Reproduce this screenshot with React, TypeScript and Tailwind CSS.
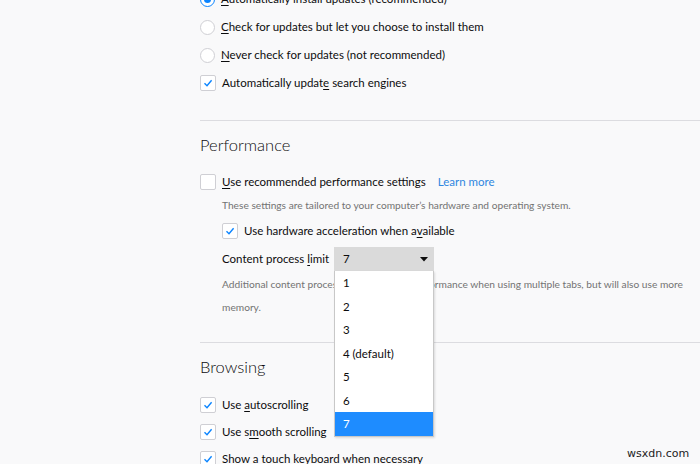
import React from "react";

const U = ({ children }: { children: React.ReactNode }) => (
  <span className="underline underline-offset-2 decoration-1">{children}</span>
);

function Radio({ checked }: { checked?: boolean }) {
  return (
    <span
      className={
        "w-[15px] h-[15px] rounded-full border bg-white shrink-0 flex items-center justify-center " +
        (checked ? "border-[#0a84ff]" : "border-[#cfcfd4]")
      }
    >
      {checked ? <span className="w-[7px] h-[7px] rounded-full bg-[#0a84ff]" /> : null}
    </span>
  );
}

function Check({ checked }: { checked?: boolean }) {
  return (
    <span className="w-[16px] h-[16px] rounded-[2px] border border-[#cfcfd4] bg-white shrink-0 flex items-center justify-center">
      {checked ? (
        <svg width="12" height="12" viewBox="0 0 12 12">
          <path d="M2.5 6.3 L5 8.7 L9.6 3.2" fill="none" stroke="#0a84ff" strokeWidth="1.4" />
        </svg>
      ) : null}
    </span>
  );
}

export default function App() {
  const items = ["1", "2", "3", "4 (default)", "5", "6", "7"];
  return (
    <div
      className="w-[700px] h-[464px] overflow-hidden bg-[#f9f9fa] text-[#0c0c0d] relative"
      style={{ fontFamily: 'Lato, "Open Sans", sans-serif' }}
    >
      <div className="pl-[200px] mt-[-15px] text-[11.5px]">
        <div className="h-[28px] flex items-center gap-[6px]">
          <Radio checked />
          <span>
            <U>A</U>utomatically install updates (recommended)
          </span>
        </div>
        <div className="h-[28px] flex items-center gap-[6px]">
          <Radio />
          <span>
            <U>C</U>heck for updates but let you choose to install them
          </span>
        </div>
        <div className="h-[28px] flex items-center gap-[6px]">
          <Radio />
          <span>
            <U>N</U>ever check for updates (not recommended)
          </span>
        </div>
        <div className="h-[28px] flex items-center gap-[6px]">
          <Check checked />
          <span>
            Automatically updat<U>e</U> search engines
          </span>
        </div>

        <div className="mt-[23px] border-t border-[#dcdce0]" />

        <div className="h-[48px] flex items-center text-[16.5px] font-light">Performance</div>

        <div className="h-[26px] flex items-center gap-[6px]">
          <Check />
          <span>
            <U>U</U>se recommended performance settings
          </span>
          <span className="ml-[6px] text-[#2f87e0]">Learn more</span>
        </div>
        <div className="h-[22px] flex items-center pl-[22px] text-[10.2px] text-[#737373]">
          These settings are tailored to your computer’s hardware and operating system.
        </div>
        <div className="h-[28px] flex items-center gap-[6px] pl-[22px]">
          <Check checked />
          <span>
            Use hardware acceleration when a<U>v</U>ailable
          </span>
        </div>
        <div className="h-[28px] flex items-center pl-[22px]">
          <span className="w-[112px] shrink-0 whitespace-nowrap">
            Content process <U>l</U>imit
          </span>
          <div className="relative">
            <div className="w-[100px] h-[24px] bg-[#dadada] flex items-center justify-between pl-[9px] pr-[6px]">
              <span>7</span>
              <svg width="8" height="5" viewBox="0 0 8 5">
                <path d="M0 0 L8 0 L4 4.5 Z" fill="#0c0c0d" />
              </svg>
            </div>
            <div className="absolute left-0 top-[24px] w-[100px] bg-white border border-t-0 border-[#c8c8c8] shadow-[1px_1px_2px_rgba(0,0,0,0.12)] z-10">
              {items.map((it) => (
                <div
                  key={it}
                  className={
                    "h-[23.5px] flex items-center pl-[8px] " +
                    (it === "7" ? "bg-[#1e8cff] text-white" : "")
                  }
                >
                  {it}
                </div>
              ))}
            </div>
          </div>
        </div>
        <div className="pl-[22px] text-[10.2px] leading-[23px] text-[#737373]">
          Additional content processes can improve performance when using multiple tabs, but will also use more
          <br />
          memory.
        </div>

        <div className="mt-[23px] border-t border-[#dcdce0]" />

        <div className="h-[48px] flex items-center text-[16.5px] font-light">Browsing</div>

        <div className="h-[27px] flex items-center gap-[6px]">
          <Check checked />
          <span>
            Use <U>a</U>utoscrolling
          </span>
        </div>
        <div className="h-[27px] flex items-center gap-[6px]">
          <Check checked />
          <span>
            Use s<U>m</U>ooth scrolling
          </span>
        </div>
        <div className="h-[27px] flex items-center gap-[6px]">
          <Check checked />
          <span>
            Show a touch <U>k</U>eyboard when necessary
          </span>
        </div>
      </div>
      <div
        className="absolute left-[627px] top-[446px] text-[11px] text-[#222]"
        style={{ fontFamily: '"DejaVu Sans", sans-serif' }}
      >
        wsxdn.com
      </div>
    </div>
  );
}
